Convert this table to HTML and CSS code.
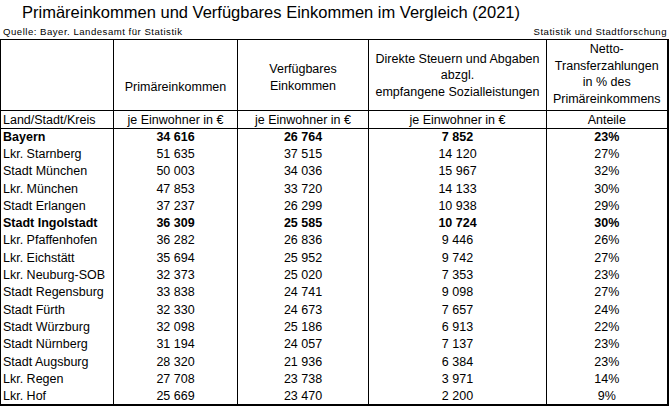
FILE: index.html
```html
<!DOCTYPE html>
<html lang="de">
<head>
<meta charset="utf-8">
<title>Primäreinkommen und Verfügbares Einkommen im Vergleich (2021)</title>
<link rel="stylesheet" href="styles.css">
</head>
<body>
<div class="page">
  <h1 class="title">Primäreinkommen und Verfügbares Einkommen im Vergleich (2021)</h1>
  <div class="meta">
    <span class="source">Quelle: Bayer. Landesamt für Statistik</span>
    <span class="org">Statistik und Stadtforschung</span>
  </div>
  <table class="data">
    <colgroup>
      <col class="c1"><col class="c2"><col class="c3"><col class="c4"><col class="c5">
    </colgroup>
    <thead>
      <tr class="head">
        <th class="h1"></th>
        <th class="h2">Primäreinkommen</th>
        <th class="h3">Verfügbares<br>Einkommen</th>
        <th class="h4">Direkte Steuern und Abgaben<br>abzgl.<br>empfangene Sozialleistungen</th>
        <th class="h5">Netto-<br>Transferzahlungen<br>in % des<br>Primäreinkommens</th>
      </tr>
      <tr class="sub">
        <th class="name">Land/Stadt/Kreis</th>
        <th>je Einwohner in €</th>
        <th>je Einwohner in €</th>
        <th>je Einwohner in €</th>
        <th>Anteile</th>
      </tr>
    </thead>
    <tbody>
      <tr class="bold"><td class="name">Bayern</td><td>34 616</td><td>26 764</td><td>7 852</td><td>23%</td></tr>
      <tr><td class="name">Lkr. Starnberg</td><td>51 635</td><td>37 515</td><td>14 120</td><td>27%</td></tr>
      <tr><td class="name">Stadt München</td><td>50 003</td><td>34 036</td><td>15 967</td><td>32%</td></tr>
      <tr><td class="name">Lkr. München</td><td>47 853</td><td>33 720</td><td>14 133</td><td>30%</td></tr>
      <tr><td class="name">Stadt Erlangen</td><td>37 237</td><td>26 299</td><td>10 938</td><td>29%</td></tr>
      <tr class="bold"><td class="name">Stadt Ingolstadt</td><td>36 309</td><td>25 585</td><td>10 724</td><td>30%</td></tr>
      <tr><td class="name">Lkr. Pfaffenhofen</td><td>36 282</td><td>26 836</td><td>9 446</td><td>26%</td></tr>
      <tr><td class="name">Lkr. Eichstätt</td><td>35 694</td><td>25 952</td><td>9 742</td><td>27%</td></tr>
      <tr><td class="name">Lkr. Neuburg-SOB</td><td>32 373</td><td>25 020</td><td>7 353</td><td>23%</td></tr>
      <tr><td class="name">Stadt Regensburg</td><td>33 838</td><td>24 741</td><td>9 098</td><td>27%</td></tr>
      <tr><td class="name">Stadt Fürth</td><td>32 330</td><td>24 673</td><td>7 657</td><td>24%</td></tr>
      <tr><td class="name">Stadt Würzburg</td><td>32 098</td><td>25 186</td><td>6 913</td><td>22%</td></tr>
      <tr><td class="name">Stadt Nürnberg</td><td>31 194</td><td>24 057</td><td>7 137</td><td>23%</td></tr>
      <tr><td class="name">Stadt Augsburg</td><td>28 320</td><td>21 936</td><td>6 384</td><td>23%</td></tr>
      <tr><td class="name">Lkr. Regen</td><td>27 708</td><td>23 738</td><td>3 971</td><td>14%</td></tr>
      <tr><td class="name">Lkr. Hof</td><td>25 669</td><td>23 470</td><td>2 200</td><td>9%</td></tr>
    </tbody>
  </table>
</div>
</body>
</html>
```

FILE: styles.css
```css
html, body {
  margin: 0;
  padding: 0;
  background: #ffffff;
}

body {
  font-family: "Liberation Sans", Arial, sans-serif;
  color: #000000;
  width: 669px;
  height: 408px;
  overflow: hidden;
}

.page {
  display: flex;
  flex-direction: column;
}

.title {
  margin: 0;
  padding: 2px 0 3px 22px;
  font-size: 16.5px;
  font-weight: normal;
  line-height: 20px;
}

.meta {
  display: flex;
  justify-content: space-between;
  height: 14px;
  line-height: 14px;
  font-size: 9.6px;
  letter-spacing: 0.5px;
  padding: 0 2px 0 3px;
}

.data {
  border-collapse: collapse;
  table-layout: fixed;
  width: 667px;
  font-size: 12.5px;
  border-top: 1px solid #000;
  border-left: 1px solid #000;
  border-right: 2px solid #000;
  border-bottom: 2px solid #000;
}

.c1 { width: 113px; }
.c2 { width: 124px; }
.c3 { width: 131px; }
.c4 { width: 178px; }
.c5 { width: 121px; }

.data th,
.data td {
  border-left: 1px solid #000;
  border-right: 1px solid #000;
  padding: 0 2px;
  text-align: center;
  white-space: nowrap;
  overflow: hidden;
}

.data th {
  font-weight: normal;
}

.head th {
  height: 71px;
  box-sizing: border-box;
  vertical-align: bottom;
  line-height: 16.4px;
  border-bottom: 1px solid #000;
}

.head .h2 { padding-bottom: 15px; }
.head .h3 { padding-bottom: 16px; }
.head .h4 { padding-bottom: 10px; }
.head .h5 { padding-bottom: 3px; }

.sub th {
  height: 18px;
  box-sizing: border-box;
  line-height: 16px;
  border-bottom: 1px solid #000;
  vertical-align: middle;
}

.data tbody td {
  height: 17.3px;
  box-sizing: border-box;
  line-height: 15px;
  vertical-align: middle;
}

.data .name {
  text-align: left;
  padding-left: 2px;
}

.bold td {
  font-weight: bold;
}
```
